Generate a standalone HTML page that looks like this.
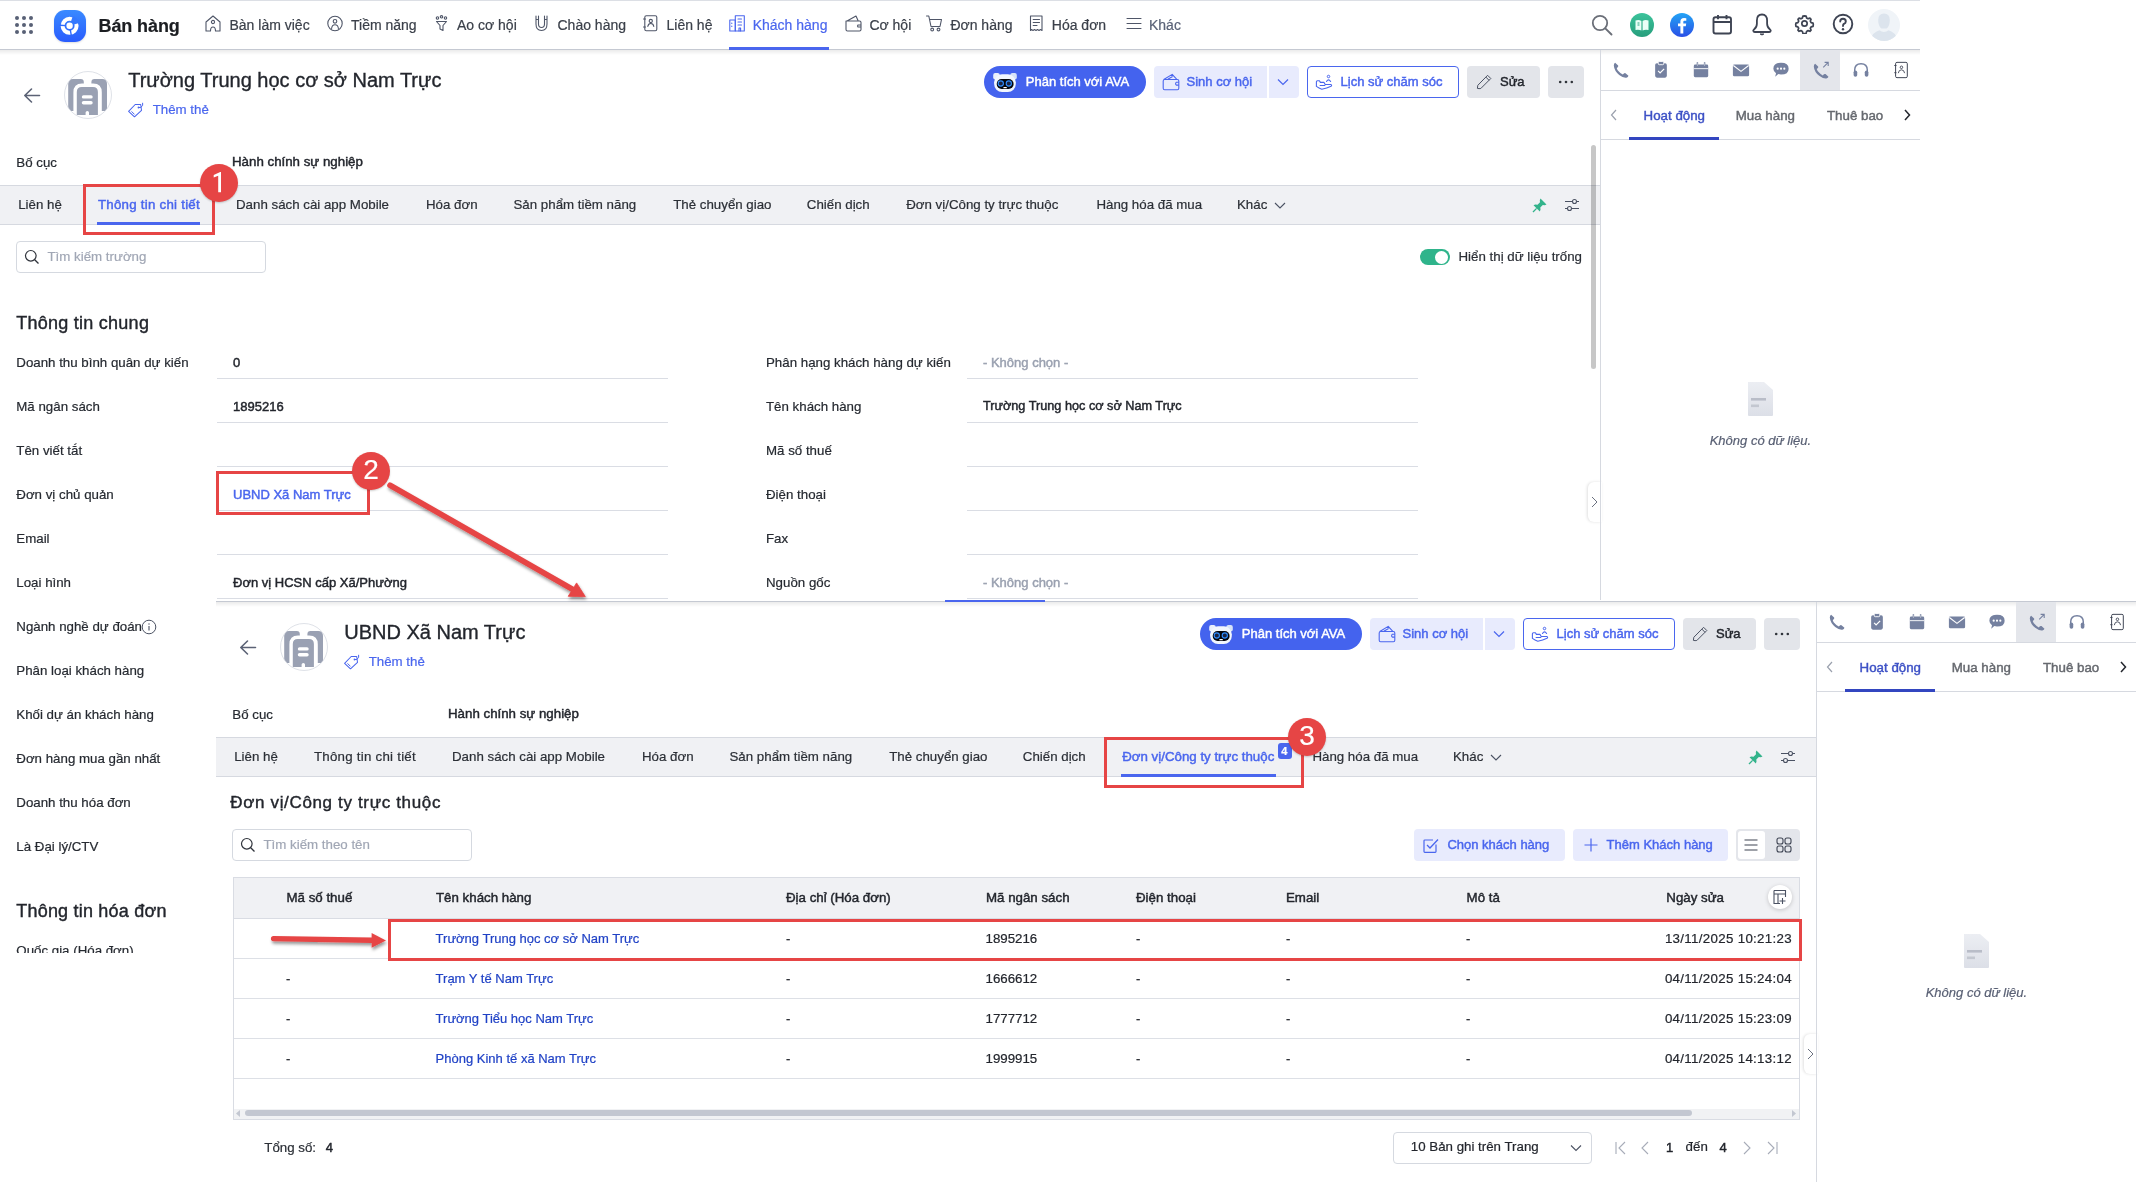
<!DOCTYPE html><html><head><meta charset="utf-8"><style>
*{margin:0;padding:0;box-sizing:border-box}
html,body{width:2145px;height:1191px;overflow:hidden;background:#fff}
body{position:relative;font-family:"Liberation Sans",sans-serif}
#A,#B,#N{will-change:transform}
.t{position:absolute;white-space:nowrap;line-height:1;-webkit-text-stroke:0.2px currentColor}
.r{position:absolute}
.md{-webkit-text-stroke:0.25px currentColor}
</style></head><body><div class="r" id="A" style="left:0;top:0;width:1920px;height:953px;overflow:hidden;background:#fff"><div class="r" style="left:0px;top:0px;width:1920px;height:49px;background:#fff"></div><div class="r" style="left:0px;top:0px;width:1920px;height:1px;background:#dcdfe5"></div><div class="r" style="left:0px;top:49px;width:1920px;height:1px;background:#c5c9d2"></div><div class="r" style="left:0px;top:50px;width:1920px;height:5px;background:linear-gradient(#00000014,#00000000)"></div><svg class="r" style="left:0px;top:0px;" width="50" height="50" viewBox="0 0 50 50" fill="none"><circle cx="17" cy="18" r="2" fill="#586075"/><circle cx="17" cy="25" r="2" fill="#586075"/><circle cx="17" cy="32" r="2" fill="#586075"/><circle cx="24" cy="18" r="2" fill="#586075"/><circle cx="24" cy="25" r="2" fill="#586075"/><circle cx="24" cy="32" r="2" fill="#586075"/><circle cx="31" cy="18" r="2" fill="#586075"/><circle cx="31" cy="25" r="2" fill="#586075"/><circle cx="31" cy="32" r="2" fill="#586075"/></svg><div class="r" style="left:54.4px;top:10px;width:31.6px;height:31.8px;border-radius:11px;background:linear-gradient(180deg,#3a8aff,#2a5cfd);box-shadow:0 1px 2px #0002"></div><svg class="r" style="left:54.4px;top:10px;" width="32" height="32" viewBox="0 0 32 32" fill="none"><circle cx="15.6" cy="15.8" r="7" stroke="#fff" stroke-width="4" fill="none"/><path d="M15.6 15.8 L18.69 6.29 A10 10 0 0 1 25.16 12.88 Z" fill="#3478ff"/><path d="M12.1 15.62 L5.6 15.28 M16.2 19.25 L17.34 25.65" stroke="#2f6afd" stroke-width="1.4"/><circle cx="15.6" cy="15.8" r="3.2" fill="#fff"/></svg><div class="t" style="left:98.5px;top:17.4px;font-size:18px;font-weight:700;color:#1c1e22;letter-spacing:-0.1px">Bán hàng</div><div class="t" style="left:229.5px;top:18.3px;font-size:14px;font-weight:400;color:#3b404a;">Bàn làm việc</div><svg class="r" style="left:204.5px;top:15px;" width="17" height="17" viewBox="0 0 17 17" fill="none"><path d="M1 7 L8 1 L15 7 V16 H10.5 Q10.5 12 8 12 Q5.5 12 5.5 16 H1Z" stroke="#4f5668" stroke-width="1.1" fill="none" stroke-linejoin="round" stroke-linecap="round"/><circle cx="8" cy="7" r="1.6" stroke="#4f5668" stroke-width="1.1" fill="none" stroke-linejoin="round" stroke-linecap="round"/></svg><div class="t" style="left:351.0px;top:18.3px;font-size:14px;font-weight:400;color:#3b404a;">Tiềm năng</div><svg class="r" style="left:326.5px;top:15px;" width="17" height="17" viewBox="0 0 17 17" fill="none"><circle cx="8" cy="8.5" r="7.2" stroke="#4f5668" stroke-width="1.1" fill="none" stroke-linejoin="round" stroke-linecap="round"/><circle cx="8" cy="6.3" r="1.8" stroke="#4f5668" stroke-width="1.1" fill="none" stroke-linejoin="round" stroke-linecap="round"/><path d="M4.6 13.5 Q5 9.7 8 9.7 Q11 9.7 11.4 13.5" stroke="#4f5668" stroke-width="1.1" fill="none" stroke-linejoin="round" stroke-linecap="round"/></svg><div class="t" style="left:457.0px;top:18.3px;font-size:14px;font-weight:400;color:#3b404a;">Ao cơ hội</div><svg class="r" style="left:434.6px;top:15px;" width="17" height="17" viewBox="0 0 17 17" fill="none"><circle cx="2.5" cy="3" r="1.2" stroke="#4f5668" stroke-width="1.1" fill="none" stroke-linejoin="round" stroke-linecap="round"/><circle cx="6.5" cy="1.8" r="1.2" stroke="#4f5668" stroke-width="1.1" fill="none" stroke-linejoin="round" stroke-linecap="round"/><circle cx="10.5" cy="3" r="1.2" stroke="#4f5668" stroke-width="1.1" fill="none" stroke-linejoin="round" stroke-linecap="round"/><path d="M1.5 6.5 H11.5 L8 10.5 V15.5 L5 14 V10.5Z" stroke="#4f5668" stroke-width="1.1" fill="none" stroke-linejoin="round" stroke-linecap="round"/></svg><div class="t" style="left:557.5px;top:18.3px;font-size:14px;font-weight:400;color:#3b404a;">Chào hàng</div><svg class="r" style="left:533.7px;top:15px;" width="17" height="17" viewBox="0 0 17 17" fill="none"><path d="M2 1 V9 Q2 15.5 7.5 15.5 Q13 15.5 13 9 V1 M2 4.5 H4.5 M10.5 4.5 H13 M4.5 1 V9 Q4.5 12.5 7.5 12.5 Q10.5 12.5 10.5 9 V1" stroke="#4f5668" stroke-width="1.1" fill="none" stroke-linejoin="round" stroke-linecap="round"/></svg><div class="t" style="left:666.5px;top:18.3px;font-size:14px;font-weight:400;color:#3b404a;">Liên hệ</div><svg class="r" style="left:643px;top:15px;" width="17" height="17" viewBox="0 0 17 17" fill="none"><rect x="1.8" y="0.8" width="12" height="15" rx="1.5" stroke="#4f5668" stroke-width="1.1" fill="none" stroke-linejoin="round" stroke-linecap="round"/><circle cx="7.8" cy="6" r="1.6" stroke="#4f5668" stroke-width="1.1" fill="none" stroke-linejoin="round" stroke-linecap="round"/><path d="M4.8 11.5 Q5.2 8.5 7.8 8.5 Q10.4 8.5 10.8 11.5 M0.5 4 H2.5 M0.5 12 H2.5" stroke="#4f5668" stroke-width="1.1" fill="none" stroke-linejoin="round" stroke-linecap="round"/></svg><div class="t" style="left:752.7px;top:18.3px;font-size:14px;font-weight:400;color:#4a66ee;">Khách hàng</div><svg class="r" style="left:729px;top:15px;" width="17" height="17" viewBox="0 0 17 17" fill="none"><rect x="0.8" y="5" width="5.5" height="11" stroke="#4a66ee" stroke-width="1.1" fill="none" stroke-linejoin="round" stroke-linecap="round"/><rect x="6.3" y="0.8" width="9" height="15.2" stroke="#4a66ee" stroke-width="1.1" fill="none" stroke-linejoin="round" stroke-linecap="round"/><path d="M2.8 8 V8.5 M2.8 11 V11.5 M9 4 H12.5 M9 7 H12.5 M9 10 H12.5 M10 16 V13 H11.6 V16" stroke="#4a66ee" stroke-width="1.1" fill="none" stroke-linejoin="round" stroke-linecap="round"/></svg><div class="t" style="left:869.4px;top:18.3px;font-size:14px;font-weight:400;color:#3b404a;">Cơ hội</div><svg class="r" style="left:844.8px;top:15px;" width="17" height="17" viewBox="0 0 17 17" fill="none"><path d="M1 6 H14.5 Q16 6 16 7.5 V14.5 Q16 16 14.5 16 H2.5 Q1 16 1 14.5Z M2 6 L11 1 L13 5.5 M16 10 H13 Q12 11 13 12 H16" stroke="#4f5668" stroke-width="1.1" fill="none" stroke-linejoin="round" stroke-linecap="round"/></svg><div class="t" style="left:950.4px;top:18.3px;font-size:14px;font-weight:400;color:#3b404a;">Đơn hàng</div><svg class="r" style="left:926px;top:15px;" width="17" height="17" viewBox="0 0 17 17" fill="none"><path d="M0.5 1 H2.8 L5 11.5 H14 L15.5 4.5 H3.8" stroke="#4f5668" stroke-width="1.1" fill="none" stroke-linejoin="round" stroke-linecap="round"/><circle cx="6.2" cy="14.5" r="1.4" stroke="#4f5668" stroke-width="1.1" fill="none" stroke-linejoin="round" stroke-linecap="round"/><circle cx="12.5" cy="14.5" r="1.4" stroke="#4f5668" stroke-width="1.1" fill="none" stroke-linejoin="round" stroke-linecap="round"/></svg><div class="t" style="left:1051.8px;top:18.3px;font-size:14px;font-weight:400;color:#3b404a;">Hóa đơn</div><svg class="r" style="left:1028.8px;top:15px;" width="17" height="17" viewBox="0 0 17 17" fill="none"><path d="M1.5 1 H13 V15.5 L11.5 14.5 L10 15.5 L8.5 14.5 L7 15.5 L5.5 14.5 L4 15.5 L2.5 14.5 L1.5 15.5Z M4.2 4.5 H10.5 M4.2 7.5 H10.5 M4.2 10.5 H8" stroke="#4f5668" stroke-width="1.1" fill="none" stroke-linejoin="round" stroke-linecap="round"/></svg><div class="t" style="left:1149.0px;top:18.3px;font-size:14px;font-weight:400;color:#5b6378;">Khác</div><svg class="r" style="left:1126px;top:15px;" width="17" height="17" viewBox="0 0 17 17" fill="none"><path d="M1 3.5 H15 M1 8.5 H15 M1 13.5 H15" stroke="#4f5668" stroke-width="1.1" fill="none" stroke-linejoin="round" stroke-linecap="round"/></svg><div class="r" style="left:729px;top:47px;width:100px;height:2.5px;background:#4a66ee"></div><svg class="r" style="left:1590px;top:13px;" width="24" height="24" viewBox="0 0 24 24" fill="none"><circle cx="10" cy="10" r="7.2" stroke="#6b6f78" stroke-width="1.8"/><path d="M15.3 15.3 L21.5 21.5" stroke="#6b6f78" stroke-width="1.9" stroke-linecap="round"/></svg><div class="r" style="left:1630px;top:13px;width:24px;height:24px;border-radius:50%;background:linear-gradient(#3cc39b,#279e7c)"></div><svg class="r" style="left:1630px;top:13px;" width="24" height="24" viewBox="0 0 24 24" fill="none"><path d="M5.5 7.5 Q9 6.5 11.4 8 V17.5 Q9 16.3 5.5 17 Z M12.6 8 Q15 6.5 18.5 7.5 V17 Q15 16.3 12.6 17.5Z" fill="#eafff7"/><path d="M7.5 10h2M7.5 12h2" stroke="#2aa582" stroke-width="1"/></svg><div class="r" style="left:1670px;top:13px;width:24px;height:24px;border-radius:50%;background:linear-gradient(#23a4f5,#2a4fe6)"></div><svg class="r" style="left:1670px;top:13px;" width="24" height="24" viewBox="0 0 24 24" fill="none"><path d="M13.3 20.5 V13.2 H15.8 L16.2 10.4 H13.3 V8.8 Q13.3 7.8 14.5 7.8 H16.3 V5.3 Q15.3 5.1 14 5.1 Q10.4 5.1 10.4 8.6 V10.4 H8 V13.2 H10.4 V20.5Z" fill="#fff"/></svg><svg class="r" style="left:1710px;top:12px;" width="24" height="24" viewBox="0 0 24 24" fill="none"><rect x="3.5" y="5.2" width="17.5" height="16.3" rx="2" stroke="#3e4453" stroke-width="1.9"/><path d="M3.5 10h17.5M8 3v4.2M16.5 3v4.2" stroke="#3e4453" stroke-width="1.9"/></svg><svg class="r" style="left:1750px;top:12px;" width="24" height="24" viewBox="0 0 24 24" fill="none"><path d="M12 2.5 Q6.9 2.5 6.9 8.5 V11.8 Q6.9 15.3 4.2 17.3 Q2.7 18.5 3.5 19.5 Q3.9 20 5 20 H19 Q20.1 20 20.5 19.5 Q21.3 18.5 19.8 17.3 Q17.1 15.3 17.1 11.8 V8.5 Q17.1 2.5 12 2.5Z" stroke="#3e4453" stroke-width="1.8" stroke-linejoin="round"/><path d="M10.2 22 Q12 24 13.8 22Z" fill="#3e4453" stroke="#3e4453" stroke-width="1"/></svg><svg class="r" style="left:1793.5px;top:13.2px;" width="21" height="21" viewBox="0 0 26 26" fill="none"><path d="M13 3.5 l2 0.3 0.6 2.4 1.8 1 2.3-0.9 1.4 1.5-0.9 2.3 1 1.8 2.4 0.6 0.3 2-0.3 2-2.4 0.6-1 1.8 0.9 2.3-1.4 1.5-2.3-0.9-1.8 1-0.6 2.4-2 0.3-2-0.3-0.6-2.4-1.8-1-2.3 0.9-1.4-1.5 0.9-2.3-1-1.8-2.4-0.6-0.3-2 0.3-2 2.4-0.6 1-1.8-0.9-2.3 1.4-1.5 2.3 0.9 1.8-1 0.6-2.4Z" stroke="#3e4453" stroke-width="2.1" stroke-linejoin="round"/><circle cx="13" cy="13" r="3.3" stroke="#3e4453" stroke-width="2.1"/></svg><svg class="r" style="left:1831px;top:12px;" width="24" height="24" viewBox="0 0 24 24" fill="none"><circle cx="12" cy="12" r="9.3" stroke="#3e4453" stroke-width="1.9"/><path d="M9.2 9.6 Q9.2 6.8 12 6.8 Q14.8 6.8 14.8 9.4 Q14.8 11 12.9 11.9 Q12 12.4 12 14" stroke="#3e4453" stroke-width="1.9" stroke-linecap="round" fill="none"/><circle cx="12" cy="17.2" r="1.2" fill="#3e4453"/></svg><div class="r" style="left:1868px;top:9px;width:32px;height:32px;border-radius:50%;background:#f0f4f8"></div><svg class="r" style="left:1868px;top:9px;" width="32" height="32" viewBox="0 0 32 32" fill="none"><defs><clipPath id="avt"><circle cx="16" cy="16" r="16"/></clipPath></defs><g clip-path="url(#avt)" fill="#dce4ed"><path d="M16 4.5 Q21.8 4.5 21.8 11 Q21.8 17.5 18.5 19.5 H13.5 Q10.2 17.5 10.2 11 Q10.2 4.5 16 4.5Z"/><path d="M2.5 31 Q4 23.5 11.5 21.3 Q13.5 23 16 23 Q18.5 23 20.5 21.3 Q28 23.5 29.5 31 Q23 34 16 34 Q9 34 2.5 31Z"/></g></svg><svg class="r" style="left:22px;top:87px;" width="20" height="17" viewBox="0 0 20 17" fill="none"><path d="M17.5 8.5 H3 M9.5 2 L2.8 8.5 L9.5 15" stroke="#5b6275" stroke-width="1.6" stroke-linecap="round" stroke-linejoin="round"/></svg><div class="r" style="left:64px;top:71px;width:48px;height:48px;border-radius:50%;border:1px solid #dfe2e8;background:#fff"></div><svg class="r" style="left:64px;top:71px;" width="48" height="48" viewBox="0 0 48 48" fill="none"><defs><clipPath id="avc"><circle cx="24" cy="24" r="23.2"/></clipPath></defs><g clip-path="url(#avc)" fill="#9aa1b3"><path d="M4.2 40 V13 Q4.2 8.1 9 8.1 H16.8 Q19.8 8.1 19.8 11 V12.6 H18 Q9.4 12.6 9.4 21.5 V40 Z"/><path d="M4.2 40 V13 Q4.2 8.1 9 8.1 H16.8 Q19.8 8.1 19.8 11 V12.6 H18 Q9.4 12.6 9.4 21.5 V40 Z" transform="translate(47.2,0) scale(-1,1)"/><path d="M12.8 44 V21 Q12.8 16 17.8 16 H28.9 Q33.9 16 33.9 21 V44 H25 V41.6 Q25 40 23.3 40 Q21.6 40 21.6 41.6 V44Z"/></g><rect x="17.8" y="24.2" width="10.9" height="3.4" rx="1.7" fill="#fff"/><rect x="17.8" y="30.1" width="10.9" height="3.4" rx="1.7" fill="#fff"/></svg><div class="t" style="left:128.2px;top:70.1px;font-size:20px;font-weight:400;color:#23262d;-webkit-text-stroke:0.35px #23262d">Trường Trung học cơ sở Nam Trực</div><svg class="r" style="left:127px;top:101px;" width="18" height="18" viewBox="0 0 18 18" fill="none"><path d="M1.6 10.4 L8.2 3.5 H13.7 L14.5 9.3 L7.5 15.8Z" stroke="#4a66ee" stroke-width="1.05" stroke-linejoin="round"/><path d="M4.5 10.4 L7.5 13.4" stroke="#4a66ee" stroke-width="1"/><circle cx="11.5" cy="6.5" r="0.9" fill="#4a66ee"/><path d="M11.5 6.5 L13.8 6.5 Q16.6 4.5 15.6 1.8" stroke="#4a66ee" stroke-width="1" fill="none"/></svg><div class="t" style="left:152.7px;top:102.9px;font-size:13.3px;font-weight:400;color:#4a66ee;">Thêm thẻ</div><div class="r" style="left:984px;top:66px;width:162px;height:32px;border-radius:16px;background:#4463ee"></div><svg class="r" style="left:992px;top:72px;" width="26" height="22" viewBox="0 0 26 22" fill="none"><rect x="1.2" y="0.9" width="6.5" height="6.5" rx="2" fill="#e9f0fb"/><rect x="18.3" y="0.9" width="6.5" height="6.5" rx="2" fill="#d7e3f8"/><rect x="2.1" y="2.3" width="21.7" height="17.8" rx="8" fill="#f1f6fd"/><rect x="4.7" y="7" width="16.9" height="9.9" rx="4.9" fill="#05060c"/><circle cx="8.8" cy="11.5" r="2.6" fill="#1b2340" stroke="#2f8dff" stroke-width="1.1"/><circle cx="16.8" cy="11.5" r="2.6" fill="#1b2340" stroke="#2f8dff" stroke-width="1.1"/><rect x="11.3" y="15" width="3.6" height="1.3" rx="0.65" fill="#fff"/></svg><div class="t" style="left:1025.8px;top:75.3px;font-size:13px;font-weight:400;color:#fff;-webkit-text-stroke:0.45px currentColor">Phân tích với AVA</div><div class="r" style="left:1154px;top:66px;width:145px;height:32px;border-radius:4px;background:#e8ebfd"></div><div class="r" style="left:1267px;top:66px;width:1.5px;height:32px;background:#fff"></div><svg class="r" style="left:1161px;top:73px;" width="20" height="20" viewBox="0 0 20 20" fill="none"><rect x="2.2" y="6.5" width="15.6" height="10.2" rx="1.4" stroke="#4a66ee" stroke-width="1.1"/><path d="M2.8 6.5 L11.2 1.4 L15.6 6.2 M6.8 6.2 L11.6 3.6" stroke="#4a66ee" stroke-width="1.1" stroke-linejoin="round"/><path d="M17.8 9.2 H15.4 Q13.8 10.6 15.4 12.1 H17.8" stroke="#4a66ee" stroke-width="1.1"/></svg><div class="t" style="left:1186.5px;top:75.3px;font-size:13px;font-weight:400;color:#4a66ee;-webkit-text-stroke:0.45px currentColor">Sinh cơ hội</div><svg class="r" style="left:1277px;top:77px;" width="12" height="10" viewBox="0 0 12 10" fill="none"><path d="M1 2.5 L6 7.5 L11 2.5" stroke="#4a66ee" stroke-width="1.2"/></svg><div class="r" style="left:1307px;top:66px;width:152px;height:32px;border-radius:4px;border:1.3px solid #4a66ee;background:#fff"></div><svg class="r" style="left:1314px;top:73px;" width="20" height="20" viewBox="0 0 20 20" fill="none"><path d="M2.4 13.4 V8.7 Q2.4 7.7 3.4 7.7 H5.4 L6.4 9.4 H9.9 L11.3 11.5 H16.7 Q18.4 12.2 17 13.3 Q13 15.2 7.8 16.2 Q5 15.2 2.4 13.4Z M6.1 12.5 H10.6 L11.5 11.5" stroke="#4a66ee" stroke-width="1.1" stroke-linejoin="round" stroke-linecap="round"/><circle cx="14.5" cy="3.5" r="1.25" stroke="#4a66ee" stroke-width="1"/><path d="M12.5 8.5 Q14.5 5.2 16.6 8.5" stroke="#4a66ee" stroke-width="1.1" stroke-linecap="round"/></svg><div class="t" style="left:1340.6px;top:75.3px;font-size:13px;font-weight:400;color:#4a66ee;-webkit-text-stroke:0.45px currentColor">Lịch sử chăm sóc</div><div class="r" style="left:1467px;top:66px;width:73px;height:32px;border-radius:4px;background:#e3e5ea"></div><svg class="r" style="left:1475px;top:73px;" width="18" height="18" viewBox="0 0 18 18" fill="none"><path d="M2.4 15.4 L2.8 12.3 L12.6 2.3 L15.8 5.5 L5.8 15.5 Q4 15.8 2.4 15.4Z M10.9 4.1 L14 7.3" stroke="#4b5263" stroke-width="1" stroke-linejoin="round"/></svg><div class="t" style="left:1500.0px;top:75.3px;font-size:13px;font-weight:400;color:#23262d;-webkit-text-stroke:0.45px currentColor">Sửa</div><div class="r" style="left:1548px;top:66px;width:36px;height:32px;border-radius:4px;background:#e3e5ea"></div><svg class="r" style="left:1558px;top:79px;" width="16" height="6" viewBox="0 0 16 6" fill="none"><circle cx="2.2" cy="3" r="1.3" fill="#30343b"/><circle cx="8" cy="3" r="1.3" fill="#30343b"/><circle cx="13.8" cy="3" r="1.3" fill="#30343b"/></svg><div class="t" style="left:16.3px;top:155.7px;font-size:13.3px;font-weight:400;color:#262a31;">Bố cục</div><div class="t" style="left:232.0px;top:154.7px;font-size:13.3px;font-weight:400;color:#23262d;-webkit-text-stroke:0.45px currentColor">Hành chính sự nghiệp</div><div class="r" style="left:0px;top:185px;width:1600px;height:40px;background:#f0f1f4;border-top:1px solid #d6d9e0;border-bottom:1px solid #d6d9e0"></div><div class="t" style="left:18.2px;top:197.7px;font-size:13.3px;font-weight:400;color:#2b2f36;">Liên hệ</div><div class="t" style="left:97.9px;top:197.7px;font-size:13.3px;font-weight:400;color:#4a66ee;letter-spacing:0.25px;-webkit-text-stroke:0.45px currentColor">Thông tin chi tiết</div><div class="t" style="left:236.0px;top:197.7px;font-size:13.3px;font-weight:400;color:#2b2f36;">Danh sách cài app Mobile</div><div class="t" style="left:426.0px;top:197.7px;font-size:13.3px;font-weight:400;color:#2b2f36;">Hóa đơn</div><div class="t" style="left:513.5px;top:197.7px;font-size:13.3px;font-weight:400;color:#2b2f36;">Sản phẩm tiềm năng</div><div class="t" style="left:673.2px;top:197.7px;font-size:13.3px;font-weight:400;color:#2b2f36;">Thẻ chuyển giao</div><div class="t" style="left:806.8px;top:197.7px;font-size:13.3px;font-weight:400;color:#2b2f36;">Chiến dịch</div><div class="t" style="left:906.2px;top:197.7px;font-size:13.3px;font-weight:400;color:#2b2f36;">Đơn vị/Công ty trực thuộc</div><div class="t" style="left:1096.4px;top:197.7px;font-size:13.3px;font-weight:400;color:#2b2f36;">Hàng hóa đã mua</div><div class="t" style="left:1237.0px;top:197.7px;font-size:13.3px;font-weight:400;color:#2b2f36;">Khác</div><div class="r" style="left:97px;top:222px;width:103px;height:3px;background:#4a66ee"></div><svg class="r" style="left:1264px;top:197px;" width="24" height="16" viewBox="0 0 24 16" fill="none"><path d="M11 5 L16 10 L21 5" stroke="#4b5263" stroke-width="1.1" fill="none" transform="translate(0,1)"/></svg><svg class="r" style="left:1531px;top:196px;" width="18" height="18" viewBox="0 0 18 18" fill="none"><path d="M9.5 2.5 L15.5 8.5 L13.8 9.2 L11.8 9 L9.3 11.5 L9.5 13.8 L8.8 15.5 L2.5 9.2 L4.2 8.5 L6.5 8.7 L9 6.2 L8.8 4.2Z" fill="#33b38b"/><path d="M5.6 12.4 L2 16" stroke="#33b38b" stroke-width="1.3"/></svg><svg class="r" style="left:1563px;top:197px;" width="18" height="16" viewBox="0 0 18 16" fill="none"><path d="M2 4.5 H16 M2 11.5 H16" stroke="#4b5263" stroke-width="1.2"/><circle cx="11.5" cy="4.5" r="2" fill="#f0f1f4" stroke="#4b5263" stroke-width="1.1"/><circle cx="6.5" cy="11.5" r="2" fill="#f0f1f4" stroke="#4b5263" stroke-width="1.1"/></svg><div class="r" style="left:1591px;top:145px;width:5px;height:224px;border-radius:3px;background:#00000038"></div><div class="r" style="left:1588px;top:482px;width:14px;height:40px;border-radius:6px 0 0 6px;background:#fff;box-shadow:-1px 0 3px #0000001f"></div><svg class="r" style="left:1589px;top:495px;" width="10" height="14" viewBox="0 0 10 14" fill="none"><path d="M3 2 L8 7 L3 12" stroke="#6b7180" stroke-width="1" fill="none"/></svg><div class="r" style="left:1600px;top:50px;width:1px;height:903px;background:#d6d9e0"></div><div class="r" style="left:1800px;top:50px;width:40px;height:40px;background:#e4e6eb"></div><div class="r" style="left:1601px;top:90px;width:319px;height:1px;background:#d6d9e0"></div><div class="r" style="left:1601px;top:139px;width:319px;height:1px;background:#d6d9e0"></div><svg class="r" style="left:1610px;top:58.8px;" width="22" height="22" viewBox="0 0 22 22" fill="none"><g transform="translate(1.1,1.1) scale(0.9)"><path d="M4.5 3 Q3 3.8 3 6 Q3.5 12 9 16.5 Q13.5 20 17 19.5 Q19 19 19.3 17.5 L16 14.5 Q15 14 14.2 14.8 L13 16 Q10 14.5 7.5 11.5 Q6.5 10 6.3 9 L7.5 7.8 Q8.3 7 7.8 6Z" fill="#7581a0"/></g></svg><svg class="r" style="left:1650px;top:58.8px;" width="22" height="22" viewBox="0 0 22 22" fill="none"><g transform="translate(1.1,1.1) scale(0.9)"><rect x="4.5" y="3.5" width="13" height="16" rx="2" fill="#7581a0"/><rect x="8" y="1.5" width="6" height="3.6" rx="1" fill="#7581a0" stroke="#fff" stroke-width="1"/><path d="M7.8 12 L10 14.2 L14.5 9.8" stroke="#fff" stroke-width="1.4" fill="none"/></g></svg><svg class="r" style="left:1690px;top:58.8px;" width="22" height="22" viewBox="0 0 22 22" fill="none"><g transform="translate(1.1,1.1) scale(0.9)"><rect x="3" y="5" width="16" height="14" rx="1.5" fill="#7581a0"/><path d="M3 9.5 H19" stroke="#fff" stroke-width="1"/><path d="M7 2.5 V7 M15 2.5 V7" stroke="#7581a0" stroke-width="1.6"/><path d="M7 3.5 V6.5 M15 3.5 V6.5" stroke="#fff" stroke-width="0.5"/></g></svg><svg class="r" style="left:1730px;top:58.8px;" width="22" height="22" viewBox="0 0 22 22" fill="none"><g transform="translate(1.1,1.1) scale(0.9)"><rect x="2" y="5" width="18" height="13" rx="1.5" fill="#7581a0"/><path d="M2.5 6 L11 12.5 L19.5 6" stroke="#fff" stroke-width="1.3" fill="none"/></g></svg><svg class="r" style="left:1770px;top:58.8px;" width="22" height="22" viewBox="0 0 22 22" fill="none"><g transform="translate(1.1,1.1) scale(0.9)"><path d="M11 3 Q19.5 3 19.5 9.5 Q19.5 16 11 16 Q9.5 16 8 15.5 L4.5 18.5 L5.5 14.5 Q2.5 12.5 2.5 9.5 Q2.5 3 11 3Z" fill="#7581a0"/><circle cx="7.3" cy="9.5" r="1.2" fill="#fff"/><circle cx="11" cy="9.5" r="1.2" fill="#fff"/><circle cx="14.7" cy="9.5" r="1.2" fill="#fff"/></g></svg><svg class="r" style="left:1810px;top:58.8px;" width="22" height="22" viewBox="0 0 22 22" fill="none"><g transform="translate(1.1,1.1) scale(0.9)"><path d="M4.5 4 Q3 4.8 3 7 Q3.5 13 9 17.5 Q13.5 21 17 20.5 Q19 20 19.3 18.5 L16 15.5 Q15 15 14.2 15.8 L13 17 Q10 15.5 7.5 12.5 Q6.5 11 6.3 10 L7.5 8.8 Q8.3 8 7.8 7Z" fill="#7581a0"/><path d="M13.5 8 L19 2.5 M15 2.5 H19 V6.5" stroke="#7581a0" stroke-width="1.2" fill="none"/></g></svg><svg class="r" style="left:1850px;top:58.8px;" width="22" height="22" viewBox="0 0 22 22" fill="none"><g transform="translate(1.1,1.1) scale(0.9)"><path d="M4 15 V11 Q4 4 11 4 Q18 4 18 11 V15" stroke="#7581a0" stroke-width="1.6" fill="none"/><rect x="2.8" y="11.5" width="4" height="7" rx="2" fill="#7581a0"/><rect x="15.2" y="11.5" width="4" height="7" rx="2" fill="#7581a0"/></g></svg><svg class="r" style="left:1890px;top:58.8px;" width="22" height="22" viewBox="0 0 22 22" fill="none"><g transform="translate(1.1,1.1) scale(0.9)"><rect x="5" y="2.5" width="13" height="17" rx="1.5" stroke="#3e4453" stroke-width="1.1" fill="none"/><circle cx="11.5" cy="8" r="1.4" stroke="#3e4453" stroke-width="1"/><path d="M8 14.5 Q8.5 10.8 11.5 10.8 Q14.5 10.8 15 14.5 M3.5 6 H6 M3.5 14 H6" stroke="#3e4453" stroke-width="1" fill="none"/></g></svg><div class="t" style="left:1643.6px;top:109.3px;font-size:13.3px;font-weight:400;color:#3e52c6;-webkit-text-stroke:0.45px currentColor">Hoạt động</div><div class="t" style="left:1735.8px;top:109.3px;font-size:13.3px;font-weight:400;color:#66696f;-webkit-text-stroke:0.45px currentColor">Mua hàng</div><div class="t" style="left:1827.0px;top:109.3px;font-size:13.3px;font-weight:400;color:#66696f;-webkit-text-stroke:0.45px currentColor">Thuê bao</div><div class="r" style="left:1629px;top:137px;width:90px;height:3px;background:#3346c0"></div><svg class="r" style="left:1609px;top:108px;" width="10" height="14" viewBox="0 0 10 14" fill="none"><path d="M7 2 L2.5 7 L7 12" stroke="#9aa0ad" stroke-width="1.2" fill="none"/></svg><svg class="r" style="left:1902px;top:108px;" width="10" height="14" viewBox="0 0 10 14" fill="none"><path d="M3 2 L7.5 7 L3 12" stroke="#23262d" stroke-width="1.5" fill="none"/></svg><svg class="r" style="left:1745px;top:380px;" width="30" height="38" viewBox="0 0 30 38" fill="none"><defs><linearGradient id="dg" x1="0" y1="0" x2="0" y2="1"><stop offset="0" stop-color="#eceef3"/><stop offset="1" stop-color="#dcdfe7"/></linearGradient></defs><path d="M3 2 H19 L28 10 V35 Q28 36 27 36 H4 Q3 36 3 35Z" fill="url(#dg)"/><rect x="6" y="18" width="15" height="2.6" fill="#b9bdc8"/><rect x="6" y="24.5" width="8" height="2.6" fill="#c3c7d0"/></svg><div class="t" style="left:1709.7px;top:433.6px;font-size:13px;font-weight:400;color:#596074;font-style:italic">Không có dữ liệu.</div><div class="r" style="left:16px;top:241px;width:250px;height:32px;border:1px solid #d5d9e0;border-radius:4px;background:#fff"></div><svg class="r" style="left:24px;top:249px;" width="16" height="16" viewBox="0 0 16 16" fill="none"><circle cx="6.8" cy="6.8" r="5.3" stroke="#2f333b" stroke-width="1.2"/><path d="M10.7 10.7 L14.5 14.5" stroke="#2f333b" stroke-width="1.3"/></svg><div class="t" style="left:47.5px;top:250.0px;font-size:13.3px;font-weight:400;color:#a1a7b5;">Tìm kiếm trường</div><div class="r" style="left:1420px;top:249px;width:30px;height:16px;border-radius:8px;background:#2fb48b"></div><div class="r" style="left:1435px;top:250.5px;width:13px;height:13px;border-radius:50%;background:#fff"></div><div class="t" style="left:1458.5px;top:249.5px;font-size:13.3px;font-weight:400;color:#2b2f36;">Hiển thị dữ liệu trống</div><div class="t" style="left:16.3px;top:314.2px;font-size:18px;font-weight:400;color:#23262d;letter-spacing:0.25px;-webkit-text-stroke:0.4px #23262d">Thông tin chung</div><div class="t" style="left:16.3px;top:355.7px;font-size:13.3px;font-weight:400;color:#262a31;">Doanh thu bình quân dự kiến</div><div class="r" style="left:217px;top:378px;width:451px;height:1px;background:#dadde4"></div><div class="t" style="left:233.0px;top:356.0px;font-size:13px;font-weight:400;color:#23262d;-webkit-text-stroke:0.45px currentColor">0</div><div class="t" style="left:16.3px;top:399.7px;font-size:13.3px;font-weight:400;color:#262a31;">Mã ngân sách</div><div class="r" style="left:217px;top:422px;width:451px;height:1px;background:#dadde4"></div><div class="t" style="left:233.0px;top:400.0px;font-size:13px;font-weight:400;color:#23262d;-webkit-text-stroke:0.45px currentColor">1895216</div><div class="t" style="left:16.3px;top:443.7px;font-size:13.3px;font-weight:400;color:#262a31;">Tên viết tắt</div><div class="r" style="left:217px;top:466px;width:451px;height:1px;background:#dadde4"></div><div class="t" style="left:16.3px;top:487.7px;font-size:13.3px;font-weight:400;color:#262a31;">Đơn vị chủ quản</div><div class="r" style="left:217px;top:510px;width:451px;height:1px;background:#dadde4"></div><div class="t" style="left:233.0px;top:488.0px;font-size:13px;font-weight:400;color:#4a66ee;-webkit-text-stroke:0.45px currentColor">UBND Xã Nam Trực</div><div class="t" style="left:16.3px;top:531.7px;font-size:13.3px;font-weight:400;color:#262a31;">Email</div><div class="r" style="left:217px;top:554px;width:451px;height:1px;background:#dadde4"></div><div class="t" style="left:16.3px;top:575.7px;font-size:13.3px;font-weight:400;color:#262a31;">Loại hình</div><div class="r" style="left:217px;top:598px;width:451px;height:1px;background:#dadde4"></div><div class="t" style="left:233.0px;top:576.0px;font-size:13px;font-weight:400;color:#23262d;-webkit-text-stroke:0.45px currentColor">Đơn vị HCSN cấp Xã/Phường</div><div class="t" style="left:16.3px;top:619.7px;font-size:13.3px;font-weight:400;color:#262a31;">Ngành nghề dự đoán</div><div class="r" style="left:217px;top:642px;width:451px;height:1px;background:#dadde4"></div><div class="t" style="left:16.3px;top:663.7px;font-size:13.3px;font-weight:400;color:#262a31;">Phân loại khách hàng</div><div class="r" style="left:217px;top:686px;width:451px;height:1px;background:#dadde4"></div><div class="t" style="left:16.3px;top:707.7px;font-size:13.3px;font-weight:400;color:#262a31;">Khối dự án khách hàng</div><div class="r" style="left:217px;top:730px;width:451px;height:1px;background:#dadde4"></div><div class="t" style="left:16.3px;top:751.7px;font-size:13.3px;font-weight:400;color:#262a31;">Đơn hàng mua gần nhất</div><div class="r" style="left:217px;top:774px;width:451px;height:1px;background:#dadde4"></div><div class="t" style="left:16.3px;top:795.7px;font-size:13.3px;font-weight:400;color:#262a31;">Doanh thu hóa đơn</div><div class="r" style="left:217px;top:818px;width:451px;height:1px;background:#dadde4"></div><div class="t" style="left:16.3px;top:839.7px;font-size:13.3px;font-weight:400;color:#262a31;">Là Đại lý/CTV</div><div class="r" style="left:217px;top:862px;width:451px;height:1px;background:#dadde4"></div><svg class="r" style="left:141px;top:619px;" width="16" height="16" viewBox="0 0 16 16" fill="none"><circle cx="8" cy="8" r="6.8" stroke="#4b5263" stroke-width="1"/><path d="M8 7 V11.5" stroke="#4b5263" stroke-width="1.1"/><circle cx="8" cy="5" r="0.7" fill="#4b5263"/></svg><div class="t" style="left:766.0px;top:355.7px;font-size:13.3px;font-weight:400;color:#262a31;">Phân hạng khách hàng dự kiến</div><div class="r" style="left:967px;top:378px;width:451px;height:1px;background:#dadde4"></div><div class="t" style="left:983.0px;top:356.0px;font-size:13px;font-weight:400;color:#9aa1b0;-webkit-text-stroke:0.45px currentColor">- Không chọn -</div><div class="t" style="left:766.0px;top:399.7px;font-size:13.3px;font-weight:400;color:#262a31;">Tên khách hàng</div><div class="r" style="left:967px;top:422px;width:451px;height:1px;background:#dadde4"></div><div class="t" style="left:983.0px;top:400.2px;font-size:12.7px;font-weight:400;color:#23262d;-webkit-text-stroke:0.45px currentColor">Trường Trung học cơ sở Nam Trực</div><div class="t" style="left:766.0px;top:443.7px;font-size:13.3px;font-weight:400;color:#262a31;">Mã số thuế</div><div class="r" style="left:967px;top:466px;width:451px;height:1px;background:#dadde4"></div><div class="t" style="left:766.0px;top:487.7px;font-size:13.3px;font-weight:400;color:#262a31;">Điện thoại</div><div class="r" style="left:967px;top:510px;width:451px;height:1px;background:#dadde4"></div><div class="t" style="left:766.0px;top:531.7px;font-size:13.3px;font-weight:400;color:#262a31;">Fax</div><div class="r" style="left:967px;top:554px;width:451px;height:1px;background:#dadde4"></div><div class="t" style="left:766.0px;top:575.7px;font-size:13.3px;font-weight:400;color:#262a31;">Nguồn gốc</div><div class="r" style="left:967px;top:598px;width:451px;height:1px;background:#dadde4"></div><div class="t" style="left:983.0px;top:576.0px;font-size:13px;font-weight:400;color:#9aa1b0;-webkit-text-stroke:0.45px currentColor">- Không chọn -</div><div class="t" style="left:16.3px;top:901.8px;font-size:18px;font-weight:400;color:#23262d;letter-spacing:0.2px;-webkit-text-stroke:0.4px #23262d">Thông tin hóa đơn</div><div class="t" style="left:16.3px;top:943.7px;font-size:13.3px;font-weight:400;color:#262a31;">Quốc gia (Hóa đơn)</div></div><div class="r" id="B" style="left:216px;top:600px;width:1920px;height:582px;overflow:hidden;background:#fff"><div class="r" style="left:0;top:-48px;width:1920px;height:680px"><div class="r" style="left:0px;top:0px;width:1920px;height:49px;background:#fff"></div><div class="r" style="left:0px;top:0px;width:1920px;height:1px;background:#dcdfe5"></div><div class="r" style="left:0px;top:49px;width:1920px;height:1px;background:#c5c9d2"></div><div class="r" style="left:0px;top:50px;width:1920px;height:5px;background:linear-gradient(#00000014,#00000000)"></div><svg class="r" style="left:0px;top:0px;" width="50" height="50" viewBox="0 0 50 50" fill="none"><circle cx="17" cy="18" r="2" fill="#586075"/><circle cx="17" cy="25" r="2" fill="#586075"/><circle cx="17" cy="32" r="2" fill="#586075"/><circle cx="24" cy="18" r="2" fill="#586075"/><circle cx="24" cy="25" r="2" fill="#586075"/><circle cx="24" cy="32" r="2" fill="#586075"/><circle cx="31" cy="18" r="2" fill="#586075"/><circle cx="31" cy="25" r="2" fill="#586075"/><circle cx="31" cy="32" r="2" fill="#586075"/></svg><div class="r" style="left:54.4px;top:10px;width:31.6px;height:31.8px;border-radius:11px;background:linear-gradient(180deg,#3a8aff,#2a5cfd);box-shadow:0 1px 2px #0002"></div><svg class="r" style="left:54.4px;top:10px;" width="32" height="32" viewBox="0 0 32 32" fill="none"><circle cx="15.6" cy="15.8" r="7" stroke="#fff" stroke-width="4" fill="none"/><path d="M15.6 15.8 L18.69 6.29 A10 10 0 0 1 25.16 12.88 Z" fill="#3478ff"/><path d="M12.1 15.62 L5.6 15.28 M16.2 19.25 L17.34 25.65" stroke="#2f6afd" stroke-width="1.4"/><circle cx="15.6" cy="15.8" r="3.2" fill="#fff"/></svg><div class="t" style="left:98.5px;top:17.4px;font-size:18px;font-weight:700;color:#1c1e22;letter-spacing:-0.1px">Bán hàng</div><div class="t" style="left:229.5px;top:18.3px;font-size:14px;font-weight:400;color:#3b404a;">Bàn làm việc</div><svg class="r" style="left:204.5px;top:15px;" width="17" height="17" viewBox="0 0 17 17" fill="none"><path d="M1 7 L8 1 L15 7 V16 H10.5 Q10.5 12 8 12 Q5.5 12 5.5 16 H1Z" stroke="#4f5668" stroke-width="1.1" fill="none" stroke-linejoin="round" stroke-linecap="round"/><circle cx="8" cy="7" r="1.6" stroke="#4f5668" stroke-width="1.1" fill="none" stroke-linejoin="round" stroke-linecap="round"/></svg><div class="t" style="left:351.0px;top:18.3px;font-size:14px;font-weight:400;color:#3b404a;">Tiềm năng</div><svg class="r" style="left:326.5px;top:15px;" width="17" height="17" viewBox="0 0 17 17" fill="none"><circle cx="8" cy="8.5" r="7.2" stroke="#4f5668" stroke-width="1.1" fill="none" stroke-linejoin="round" stroke-linecap="round"/><circle cx="8" cy="6.3" r="1.8" stroke="#4f5668" stroke-width="1.1" fill="none" stroke-linejoin="round" stroke-linecap="round"/><path d="M4.6 13.5 Q5 9.7 8 9.7 Q11 9.7 11.4 13.5" stroke="#4f5668" stroke-width="1.1" fill="none" stroke-linejoin="round" stroke-linecap="round"/></svg><div class="t" style="left:457.0px;top:18.3px;font-size:14px;font-weight:400;color:#3b404a;">Ao cơ hội</div><svg class="r" style="left:434.6px;top:15px;" width="17" height="17" viewBox="0 0 17 17" fill="none"><circle cx="2.5" cy="3" r="1.2" stroke="#4f5668" stroke-width="1.1" fill="none" stroke-linejoin="round" stroke-linecap="round"/><circle cx="6.5" cy="1.8" r="1.2" stroke="#4f5668" stroke-width="1.1" fill="none" stroke-linejoin="round" stroke-linecap="round"/><circle cx="10.5" cy="3" r="1.2" stroke="#4f5668" stroke-width="1.1" fill="none" stroke-linejoin="round" stroke-linecap="round"/><path d="M1.5 6.5 H11.5 L8 10.5 V15.5 L5 14 V10.5Z" stroke="#4f5668" stroke-width="1.1" fill="none" stroke-linejoin="round" stroke-linecap="round"/></svg><div class="t" style="left:557.5px;top:18.3px;font-size:14px;font-weight:400;color:#3b404a;">Chào hàng</div><svg class="r" style="left:533.7px;top:15px;" width="17" height="17" viewBox="0 0 17 17" fill="none"><path d="M2 1 V9 Q2 15.5 7.5 15.5 Q13 15.5 13 9 V1 M2 4.5 H4.5 M10.5 4.5 H13 M4.5 1 V9 Q4.5 12.5 7.5 12.5 Q10.5 12.5 10.5 9 V1" stroke="#4f5668" stroke-width="1.1" fill="none" stroke-linejoin="round" stroke-linecap="round"/></svg><div class="t" style="left:666.5px;top:18.3px;font-size:14px;font-weight:400;color:#3b404a;">Liên hệ</div><svg class="r" style="left:643px;top:15px;" width="17" height="17" viewBox="0 0 17 17" fill="none"><rect x="1.8" y="0.8" width="12" height="15" rx="1.5" stroke="#4f5668" stroke-width="1.1" fill="none" stroke-linejoin="round" stroke-linecap="round"/><circle cx="7.8" cy="6" r="1.6" stroke="#4f5668" stroke-width="1.1" fill="none" stroke-linejoin="round" stroke-linecap="round"/><path d="M4.8 11.5 Q5.2 8.5 7.8 8.5 Q10.4 8.5 10.8 11.5 M0.5 4 H2.5 M0.5 12 H2.5" stroke="#4f5668" stroke-width="1.1" fill="none" stroke-linejoin="round" stroke-linecap="round"/></svg><div class="t" style="left:752.7px;top:18.3px;font-size:14px;font-weight:400;color:#4a66ee;">Khách hàng</div><svg class="r" style="left:729px;top:15px;" width="17" height="17" viewBox="0 0 17 17" fill="none"><rect x="0.8" y="5" width="5.5" height="11" stroke="#4a66ee" stroke-width="1.1" fill="none" stroke-linejoin="round" stroke-linecap="round"/><rect x="6.3" y="0.8" width="9" height="15.2" stroke="#4a66ee" stroke-width="1.1" fill="none" stroke-linejoin="round" stroke-linecap="round"/><path d="M2.8 8 V8.5 M2.8 11 V11.5 M9 4 H12.5 M9 7 H12.5 M9 10 H12.5 M10 16 V13 H11.6 V16" stroke="#4a66ee" stroke-width="1.1" fill="none" stroke-linejoin="round" stroke-linecap="round"/></svg><div class="t" style="left:869.4px;top:18.3px;font-size:14px;font-weight:400;color:#3b404a;">Cơ hội</div><svg class="r" style="left:844.8px;top:15px;" width="17" height="17" viewBox="0 0 17 17" fill="none"><path d="M1 6 H14.5 Q16 6 16 7.5 V14.5 Q16 16 14.5 16 H2.5 Q1 16 1 14.5Z M2 6 L11 1 L13 5.5 M16 10 H13 Q12 11 13 12 H16" stroke="#4f5668" stroke-width="1.1" fill="none" stroke-linejoin="round" stroke-linecap="round"/></svg><div class="t" style="left:950.4px;top:18.3px;font-size:14px;font-weight:400;color:#3b404a;">Đơn hàng</div><svg class="r" style="left:926px;top:15px;" width="17" height="17" viewBox="0 0 17 17" fill="none"><path d="M0.5 1 H2.8 L5 11.5 H14 L15.5 4.5 H3.8" stroke="#4f5668" stroke-width="1.1" fill="none" stroke-linejoin="round" stroke-linecap="round"/><circle cx="6.2" cy="14.5" r="1.4" stroke="#4f5668" stroke-width="1.1" fill="none" stroke-linejoin="round" stroke-linecap="round"/><circle cx="12.5" cy="14.5" r="1.4" stroke="#4f5668" stroke-width="1.1" fill="none" stroke-linejoin="round" stroke-linecap="round"/></svg><div class="t" style="left:1051.8px;top:18.3px;font-size:14px;font-weight:400;color:#3b404a;">Hóa đơn</div><svg class="r" style="left:1028.8px;top:15px;" width="17" height="17" viewBox="0 0 17 17" fill="none"><path d="M1.5 1 H13 V15.5 L11.5 14.5 L10 15.5 L8.5 14.5 L7 15.5 L5.5 14.5 L4 15.5 L2.5 14.5 L1.5 15.5Z M4.2 4.5 H10.5 M4.2 7.5 H10.5 M4.2 10.5 H8" stroke="#4f5668" stroke-width="1.1" fill="none" stroke-linejoin="round" stroke-linecap="round"/></svg><div class="t" style="left:1149.0px;top:18.3px;font-size:14px;font-weight:400;color:#5b6378;">Khác</div><svg class="r" style="left:1126px;top:15px;" width="17" height="17" viewBox="0 0 17 17" fill="none"><path d="M1 3.5 H15 M1 8.5 H15 M1 13.5 H15" stroke="#4f5668" stroke-width="1.1" fill="none" stroke-linejoin="round" stroke-linecap="round"/></svg><div class="r" style="left:729px;top:47px;width:100px;height:2.5px;background:#4a66ee"></div><svg class="r" style="left:1590px;top:13px;" width="24" height="24" viewBox="0 0 24 24" fill="none"><circle cx="10" cy="10" r="7.2" stroke="#6b6f78" stroke-width="1.8"/><path d="M15.3 15.3 L21.5 21.5" stroke="#6b6f78" stroke-width="1.9" stroke-linecap="round"/></svg><div class="r" style="left:1630px;top:13px;width:24px;height:24px;border-radius:50%;background:linear-gradient(#3cc39b,#279e7c)"></div><svg class="r" style="left:1630px;top:13px;" width="24" height="24" viewBox="0 0 24 24" fill="none"><path d="M5.5 7.5 Q9 6.5 11.4 8 V17.5 Q9 16.3 5.5 17 Z M12.6 8 Q15 6.5 18.5 7.5 V17 Q15 16.3 12.6 17.5Z" fill="#eafff7"/><path d="M7.5 10h2M7.5 12h2" stroke="#2aa582" stroke-width="1"/></svg><div class="r" style="left:1670px;top:13px;width:24px;height:24px;border-radius:50%;background:linear-gradient(#23a4f5,#2a4fe6)"></div><svg class="r" style="left:1670px;top:13px;" width="24" height="24" viewBox="0 0 24 24" fill="none"><path d="M13.3 20.5 V13.2 H15.8 L16.2 10.4 H13.3 V8.8 Q13.3 7.8 14.5 7.8 H16.3 V5.3 Q15.3 5.1 14 5.1 Q10.4 5.1 10.4 8.6 V10.4 H8 V13.2 H10.4 V20.5Z" fill="#fff"/></svg><svg class="r" style="left:1710px;top:12px;" width="24" height="24" viewBox="0 0 24 24" fill="none"><rect x="3.5" y="5.2" width="17.5" height="16.3" rx="2" stroke="#3e4453" stroke-width="1.9"/><path d="M3.5 10h17.5M8 3v4.2M16.5 3v4.2" stroke="#3e4453" stroke-width="1.9"/></svg><svg class="r" style="left:1750px;top:12px;" width="24" height="24" viewBox="0 0 24 24" fill="none"><path d="M12 2.5 Q6.9 2.5 6.9 8.5 V11.8 Q6.9 15.3 4.2 17.3 Q2.7 18.5 3.5 19.5 Q3.9 20 5 20 H19 Q20.1 20 20.5 19.5 Q21.3 18.5 19.8 17.3 Q17.1 15.3 17.1 11.8 V8.5 Q17.1 2.5 12 2.5Z" stroke="#3e4453" stroke-width="1.8" stroke-linejoin="round"/><path d="M10.2 22 Q12 24 13.8 22Z" fill="#3e4453" stroke="#3e4453" stroke-width="1"/></svg><svg class="r" style="left:1793.5px;top:13.2px;" width="21" height="21" viewBox="0 0 26 26" fill="none"><path d="M13 3.5 l2 0.3 0.6 2.4 1.8 1 2.3-0.9 1.4 1.5-0.9 2.3 1 1.8 2.4 0.6 0.3 2-0.3 2-2.4 0.6-1 1.8 0.9 2.3-1.4 1.5-2.3-0.9-1.8 1-0.6 2.4-2 0.3-2-0.3-0.6-2.4-1.8-1-2.3 0.9-1.4-1.5 0.9-2.3-1-1.8-2.4-0.6-0.3-2 0.3-2 2.4-0.6 1-1.8-0.9-2.3 1.4-1.5 2.3 0.9 1.8-1 0.6-2.4Z" stroke="#3e4453" stroke-width="2.1" stroke-linejoin="round"/><circle cx="13" cy="13" r="3.3" stroke="#3e4453" stroke-width="2.1"/></svg><svg class="r" style="left:1831px;top:12px;" width="24" height="24" viewBox="0 0 24 24" fill="none"><circle cx="12" cy="12" r="9.3" stroke="#3e4453" stroke-width="1.9"/><path d="M9.2 9.6 Q9.2 6.8 12 6.8 Q14.8 6.8 14.8 9.4 Q14.8 11 12.9 11.9 Q12 12.4 12 14" stroke="#3e4453" stroke-width="1.9" stroke-linecap="round" fill="none"/><circle cx="12" cy="17.2" r="1.2" fill="#3e4453"/></svg><div class="r" style="left:1868px;top:9px;width:32px;height:32px;border-radius:50%;background:#f0f4f8"></div><svg class="r" style="left:1868px;top:9px;" width="32" height="32" viewBox="0 0 32 32" fill="none"><defs><clipPath id="avt"><circle cx="16" cy="16" r="16"/></clipPath></defs><g clip-path="url(#avt)" fill="#dce4ed"><path d="M16 4.5 Q21.8 4.5 21.8 11 Q21.8 17.5 18.5 19.5 H13.5 Q10.2 17.5 10.2 11 Q10.2 4.5 16 4.5Z"/><path d="M2.5 31 Q4 23.5 11.5 21.3 Q13.5 23 16 23 Q18.5 23 20.5 21.3 Q28 23.5 29.5 31 Q23 34 16 34 Q9 34 2.5 31Z"/></g></svg><svg class="r" style="left:22px;top:87px;" width="20" height="17" viewBox="0 0 20 17" fill="none"><path d="M17.5 8.5 H3 M9.5 2 L2.8 8.5 L9.5 15" stroke="#5b6275" stroke-width="1.6" stroke-linecap="round" stroke-linejoin="round"/></svg><div class="r" style="left:64px;top:71px;width:48px;height:48px;border-radius:50%;border:1px solid #dfe2e8;background:#fff"></div><svg class="r" style="left:64px;top:71px;" width="48" height="48" viewBox="0 0 48 48" fill="none"><defs><clipPath id="avc"><circle cx="24" cy="24" r="23.2"/></clipPath></defs><g clip-path="url(#avc)" fill="#9aa1b3"><path d="M4.2 40 V13 Q4.2 8.1 9 8.1 H16.8 Q19.8 8.1 19.8 11 V12.6 H18 Q9.4 12.6 9.4 21.5 V40 Z"/><path d="M4.2 40 V13 Q4.2 8.1 9 8.1 H16.8 Q19.8 8.1 19.8 11 V12.6 H18 Q9.4 12.6 9.4 21.5 V40 Z" transform="translate(47.2,0) scale(-1,1)"/><path d="M12.8 44 V21 Q12.8 16 17.8 16 H28.9 Q33.9 16 33.9 21 V44 H25 V41.6 Q25 40 23.3 40 Q21.6 40 21.6 41.6 V44Z"/></g><rect x="17.8" y="24.2" width="10.9" height="3.4" rx="1.7" fill="#fff"/><rect x="17.8" y="30.1" width="10.9" height="3.4" rx="1.7" fill="#fff"/></svg><div class="t" style="left:128.2px;top:70.1px;font-size:20px;font-weight:400;color:#23262d;-webkit-text-stroke:0.35px #23262d">UBND Xã Nam Trực</div><svg class="r" style="left:127px;top:101px;" width="18" height="18" viewBox="0 0 18 18" fill="none"><path d="M1.6 10.4 L8.2 3.5 H13.7 L14.5 9.3 L7.5 15.8Z" stroke="#4a66ee" stroke-width="1.05" stroke-linejoin="round"/><path d="M4.5 10.4 L7.5 13.4" stroke="#4a66ee" stroke-width="1"/><circle cx="11.5" cy="6.5" r="0.9" fill="#4a66ee"/><path d="M11.5 6.5 L13.8 6.5 Q16.6 4.5 15.6 1.8" stroke="#4a66ee" stroke-width="1" fill="none"/></svg><div class="t" style="left:152.7px;top:102.9px;font-size:13.3px;font-weight:400;color:#4a66ee;">Thêm thẻ</div><div class="r" style="left:984px;top:66px;width:162px;height:32px;border-radius:16px;background:#4463ee"></div><svg class="r" style="left:992px;top:72px;" width="26" height="22" viewBox="0 0 26 22" fill="none"><rect x="1.2" y="0.9" width="6.5" height="6.5" rx="2" fill="#e9f0fb"/><rect x="18.3" y="0.9" width="6.5" height="6.5" rx="2" fill="#d7e3f8"/><rect x="2.1" y="2.3" width="21.7" height="17.8" rx="8" fill="#f1f6fd"/><rect x="4.7" y="7" width="16.9" height="9.9" rx="4.9" fill="#05060c"/><circle cx="8.8" cy="11.5" r="2.6" fill="#1b2340" stroke="#2f8dff" stroke-width="1.1"/><circle cx="16.8" cy="11.5" r="2.6" fill="#1b2340" stroke="#2f8dff" stroke-width="1.1"/><rect x="11.3" y="15" width="3.6" height="1.3" rx="0.65" fill="#fff"/></svg><div class="t" style="left:1025.8px;top:75.3px;font-size:13px;font-weight:400;color:#fff;-webkit-text-stroke:0.45px currentColor">Phân tích với AVA</div><div class="r" style="left:1154px;top:66px;width:145px;height:32px;border-radius:4px;background:#e8ebfd"></div><div class="r" style="left:1267px;top:66px;width:1.5px;height:32px;background:#fff"></div><svg class="r" style="left:1161px;top:73px;" width="20" height="20" viewBox="0 0 20 20" fill="none"><rect x="2.2" y="6.5" width="15.6" height="10.2" rx="1.4" stroke="#4a66ee" stroke-width="1.1"/><path d="M2.8 6.5 L11.2 1.4 L15.6 6.2 M6.8 6.2 L11.6 3.6" stroke="#4a66ee" stroke-width="1.1" stroke-linejoin="round"/><path d="M17.8 9.2 H15.4 Q13.8 10.6 15.4 12.1 H17.8" stroke="#4a66ee" stroke-width="1.1"/></svg><div class="t" style="left:1186.5px;top:75.3px;font-size:13px;font-weight:400;color:#4a66ee;-webkit-text-stroke:0.45px currentColor">Sinh cơ hội</div><svg class="r" style="left:1277px;top:77px;" width="12" height="10" viewBox="0 0 12 10" fill="none"><path d="M1 2.5 L6 7.5 L11 2.5" stroke="#4a66ee" stroke-width="1.2"/></svg><div class="r" style="left:1307px;top:66px;width:152px;height:32px;border-radius:4px;border:1.3px solid #4a66ee;background:#fff"></div><svg class="r" style="left:1314px;top:73px;" width="20" height="20" viewBox="0 0 20 20" fill="none"><path d="M2.4 13.4 V8.7 Q2.4 7.7 3.4 7.7 H5.4 L6.4 9.4 H9.9 L11.3 11.5 H16.7 Q18.4 12.2 17 13.3 Q13 15.2 7.8 16.2 Q5 15.2 2.4 13.4Z M6.1 12.5 H10.6 L11.5 11.5" stroke="#4a66ee" stroke-width="1.1" stroke-linejoin="round" stroke-linecap="round"/><circle cx="14.5" cy="3.5" r="1.25" stroke="#4a66ee" stroke-width="1"/><path d="M12.5 8.5 Q14.5 5.2 16.6 8.5" stroke="#4a66ee" stroke-width="1.1" stroke-linecap="round"/></svg><div class="t" style="left:1340.6px;top:75.3px;font-size:13px;font-weight:400;color:#4a66ee;-webkit-text-stroke:0.45px currentColor">Lịch sử chăm sóc</div><div class="r" style="left:1467px;top:66px;width:73px;height:32px;border-radius:4px;background:#e3e5ea"></div><svg class="r" style="left:1475px;top:73px;" width="18" height="18" viewBox="0 0 18 18" fill="none"><path d="M2.4 15.4 L2.8 12.3 L12.6 2.3 L15.8 5.5 L5.8 15.5 Q4 15.8 2.4 15.4Z M10.9 4.1 L14 7.3" stroke="#4b5263" stroke-width="1" stroke-linejoin="round"/></svg><div class="t" style="left:1500.0px;top:75.3px;font-size:13px;font-weight:400;color:#23262d;-webkit-text-stroke:0.45px currentColor">Sửa</div><div class="r" style="left:1548px;top:66px;width:36px;height:32px;border-radius:4px;background:#e3e5ea"></div><svg class="r" style="left:1558px;top:79px;" width="16" height="6" viewBox="0 0 16 6" fill="none"><circle cx="2.2" cy="3" r="1.3" fill="#30343b"/><circle cx="8" cy="3" r="1.3" fill="#30343b"/><circle cx="13.8" cy="3" r="1.3" fill="#30343b"/></svg><div class="t" style="left:16.3px;top:155.7px;font-size:13.3px;font-weight:400;color:#262a31;">Bố cục</div><div class="t" style="left:232.0px;top:154.7px;font-size:13.3px;font-weight:400;color:#23262d;-webkit-text-stroke:0.45px currentColor">Hành chính sự nghiệp</div><div class="r" style="left:0px;top:185px;width:1600px;height:40px;background:#f0f1f4;border-top:1px solid #d6d9e0;border-bottom:1px solid #d6d9e0"></div><div class="t" style="left:18.2px;top:197.7px;font-size:13.3px;font-weight:400;color:#2b2f36;">Liên hệ</div><div class="t" style="left:97.9px;top:197.7px;font-size:13.3px;font-weight:400;color:#2b2f36;letter-spacing:0.25px;">Thông tin chi tiết</div><div class="t" style="left:236.0px;top:197.7px;font-size:13.3px;font-weight:400;color:#2b2f36;">Danh sách cài app Mobile</div><div class="t" style="left:426.0px;top:197.7px;font-size:13.3px;font-weight:400;color:#2b2f36;">Hóa đơn</div><div class="t" style="left:513.5px;top:197.7px;font-size:13.3px;font-weight:400;color:#2b2f36;">Sản phẩm tiềm năng</div><div class="t" style="left:673.2px;top:197.7px;font-size:13.3px;font-weight:400;color:#2b2f36;">Thẻ chuyển giao</div><div class="t" style="left:806.8px;top:197.7px;font-size:13.3px;font-weight:400;color:#2b2f36;">Chiến dịch</div><div class="t" style="left:906.2px;top:197.7px;font-size:13.3px;font-weight:400;color:#4a66ee;-webkit-text-stroke:0.45px currentColor">Đơn vị/Công ty trực thuộc</div><div class="t" style="left:1096.4px;top:197.7px;font-size:13.3px;font-weight:400;color:#2b2f36;">Hàng hóa đã mua</div><div class="t" style="left:1237.0px;top:197.7px;font-size:13.3px;font-weight:400;color:#2b2f36;">Khác</div><div class="r" style="left:905px;top:222px;width:155px;height:3px;background:#4a66ee"></div><svg class="r" style="left:1264px;top:197px;" width="24" height="16" viewBox="0 0 24 16" fill="none"><path d="M11 5 L16 10 L21 5" stroke="#4b5263" stroke-width="1.1" fill="none" transform="translate(0,1)"/></svg><svg class="r" style="left:1531px;top:196px;" width="18" height="18" viewBox="0 0 18 18" fill="none"><path d="M9.5 2.5 L15.5 8.5 L13.8 9.2 L11.8 9 L9.3 11.5 L9.5 13.8 L8.8 15.5 L2.5 9.2 L4.2 8.5 L6.5 8.7 L9 6.2 L8.8 4.2Z" fill="#33b38b"/><path d="M5.6 12.4 L2 16" stroke="#33b38b" stroke-width="1.3"/></svg><svg class="r" style="left:1563px;top:197px;" width="18" height="16" viewBox="0 0 18 16" fill="none"><path d="M2 4.5 H16 M2 11.5 H16" stroke="#4b5263" stroke-width="1.2"/><circle cx="11.5" cy="4.5" r="2" fill="#f0f1f4" stroke="#4b5263" stroke-width="1.1"/><circle cx="6.5" cy="11.5" r="2" fill="#f0f1f4" stroke="#4b5263" stroke-width="1.1"/></svg><div class="r" style="left:1062px;top:191px;width:14px;height:15.5px;border-radius:3px;background:#4a66ee"></div><div class="t" style="left:1065.3px;top:193.7px;font-size:11px;font-weight:700;color:#fff;">4</div><div class="r" style="left:1588px;top:482px;width:14px;height:40px;border-radius:6px 0 0 6px;background:#fff;box-shadow:-1px 0 3px #0000001f"></div><svg class="r" style="left:1589px;top:495px;" width="10" height="14" viewBox="0 0 10 14" fill="none"><path d="M3 2 L8 7 L3 12" stroke="#6b7180" stroke-width="1" fill="none"/></svg><div class="r" style="left:1600px;top:50px;width:1px;height:903px;background:#d6d9e0"></div><div class="r" style="left:1800px;top:50px;width:40px;height:40px;background:#e4e6eb"></div><div class="r" style="left:1601px;top:90px;width:319px;height:1px;background:#d6d9e0"></div><div class="r" style="left:1601px;top:139px;width:319px;height:1px;background:#d6d9e0"></div><svg class="r" style="left:1610px;top:58.8px;" width="22" height="22" viewBox="0 0 22 22" fill="none"><g transform="translate(1.1,1.1) scale(0.9)"><path d="M4.5 3 Q3 3.8 3 6 Q3.5 12 9 16.5 Q13.5 20 17 19.5 Q19 19 19.3 17.5 L16 14.5 Q15 14 14.2 14.8 L13 16 Q10 14.5 7.5 11.5 Q6.5 10 6.3 9 L7.5 7.8 Q8.3 7 7.8 6Z" fill="#7581a0"/></g></svg><svg class="r" style="left:1650px;top:58.8px;" width="22" height="22" viewBox="0 0 22 22" fill="none"><g transform="translate(1.1,1.1) scale(0.9)"><rect x="4.5" y="3.5" width="13" height="16" rx="2" fill="#7581a0"/><rect x="8" y="1.5" width="6" height="3.6" rx="1" fill="#7581a0" stroke="#fff" stroke-width="1"/><path d="M7.8 12 L10 14.2 L14.5 9.8" stroke="#fff" stroke-width="1.4" fill="none"/></g></svg><svg class="r" style="left:1690px;top:58.8px;" width="22" height="22" viewBox="0 0 22 22" fill="none"><g transform="translate(1.1,1.1) scale(0.9)"><rect x="3" y="5" width="16" height="14" rx="1.5" fill="#7581a0"/><path d="M3 9.5 H19" stroke="#fff" stroke-width="1"/><path d="M7 2.5 V7 M15 2.5 V7" stroke="#7581a0" stroke-width="1.6"/><path d="M7 3.5 V6.5 M15 3.5 V6.5" stroke="#fff" stroke-width="0.5"/></g></svg><svg class="r" style="left:1730px;top:58.8px;" width="22" height="22" viewBox="0 0 22 22" fill="none"><g transform="translate(1.1,1.1) scale(0.9)"><rect x="2" y="5" width="18" height="13" rx="1.5" fill="#7581a0"/><path d="M2.5 6 L11 12.5 L19.5 6" stroke="#fff" stroke-width="1.3" fill="none"/></g></svg><svg class="r" style="left:1770px;top:58.8px;" width="22" height="22" viewBox="0 0 22 22" fill="none"><g transform="translate(1.1,1.1) scale(0.9)"><path d="M11 3 Q19.5 3 19.5 9.5 Q19.5 16 11 16 Q9.5 16 8 15.5 L4.5 18.5 L5.5 14.5 Q2.5 12.5 2.5 9.5 Q2.5 3 11 3Z" fill="#7581a0"/><circle cx="7.3" cy="9.5" r="1.2" fill="#fff"/><circle cx="11" cy="9.5" r="1.2" fill="#fff"/><circle cx="14.7" cy="9.5" r="1.2" fill="#fff"/></g></svg><svg class="r" style="left:1810px;top:58.8px;" width="22" height="22" viewBox="0 0 22 22" fill="none"><g transform="translate(1.1,1.1) scale(0.9)"><path d="M4.5 4 Q3 4.8 3 7 Q3.5 13 9 17.5 Q13.5 21 17 20.5 Q19 20 19.3 18.5 L16 15.5 Q15 15 14.2 15.8 L13 17 Q10 15.5 7.5 12.5 Q6.5 11 6.3 10 L7.5 8.8 Q8.3 8 7.8 7Z" fill="#7581a0"/><path d="M13.5 8 L19 2.5 M15 2.5 H19 V6.5" stroke="#7581a0" stroke-width="1.2" fill="none"/></g></svg><svg class="r" style="left:1850px;top:58.8px;" width="22" height="22" viewBox="0 0 22 22" fill="none"><g transform="translate(1.1,1.1) scale(0.9)"><path d="M4 15 V11 Q4 4 11 4 Q18 4 18 11 V15" stroke="#7581a0" stroke-width="1.6" fill="none"/><rect x="2.8" y="11.5" width="4" height="7" rx="2" fill="#7581a0"/><rect x="15.2" y="11.5" width="4" height="7" rx="2" fill="#7581a0"/></g></svg><svg class="r" style="left:1890px;top:58.8px;" width="22" height="22" viewBox="0 0 22 22" fill="none"><g transform="translate(1.1,1.1) scale(0.9)"><rect x="5" y="2.5" width="13" height="17" rx="1.5" stroke="#3e4453" stroke-width="1.1" fill="none"/><circle cx="11.5" cy="8" r="1.4" stroke="#3e4453" stroke-width="1"/><path d="M8 14.5 Q8.5 10.8 11.5 10.8 Q14.5 10.8 15 14.5 M3.5 6 H6 M3.5 14 H6" stroke="#3e4453" stroke-width="1" fill="none"/></g></svg><div class="t" style="left:1643.6px;top:109.3px;font-size:13.3px;font-weight:400;color:#3e52c6;-webkit-text-stroke:0.45px currentColor">Hoạt động</div><div class="t" style="left:1735.8px;top:109.3px;font-size:13.3px;font-weight:400;color:#66696f;-webkit-text-stroke:0.45px currentColor">Mua hàng</div><div class="t" style="left:1827.0px;top:109.3px;font-size:13.3px;font-weight:400;color:#66696f;-webkit-text-stroke:0.45px currentColor">Thuê bao</div><div class="r" style="left:1629px;top:137px;width:90px;height:3px;background:#3346c0"></div><svg class="r" style="left:1609px;top:108px;" width="10" height="14" viewBox="0 0 10 14" fill="none"><path d="M7 2 L2.5 7 L7 12" stroke="#9aa0ad" stroke-width="1.2" fill="none"/></svg><svg class="r" style="left:1902px;top:108px;" width="10" height="14" viewBox="0 0 10 14" fill="none"><path d="M3 2 L7.5 7 L3 12" stroke="#23262d" stroke-width="1.5" fill="none"/></svg><svg class="r" style="left:1745px;top:380px;" width="30" height="38" viewBox="0 0 30 38" fill="none"><defs><linearGradient id="dg" x1="0" y1="0" x2="0" y2="1"><stop offset="0" stop-color="#eceef3"/><stop offset="1" stop-color="#dcdfe7"/></linearGradient></defs><path d="M3 2 H19 L28 10 V35 Q28 36 27 36 H4 Q3 36 3 35Z" fill="url(#dg)"/><rect x="6" y="18" width="15" height="2.6" fill="#b9bdc8"/><rect x="6" y="24.5" width="8" height="2.6" fill="#c3c7d0"/></svg><div class="t" style="left:1709.7px;top:433.6px;font-size:13px;font-weight:400;color:#596074;font-style:italic">Không có dữ liệu.</div><div class="t" style="left:14.3px;top:242.2px;font-size:17px;font-weight:400;color:#23262d;letter-spacing:0.65px;-webkit-text-stroke:0.4px #23262d">Đơn vị/Công ty trực thuộc</div><div class="r" style="left:16px;top:277px;width:240px;height:32px;border:1px solid #d5d9e0;border-radius:4px;background:#fff"></div><svg class="r" style="left:24px;top:285px;" width="16" height="16" viewBox="0 0 16 16" fill="none"><circle cx="6.8" cy="6.8" r="5.3" stroke="#2f333b" stroke-width="1.2"/><path d="M10.7 10.7 L14.5 14.5" stroke="#2f333b" stroke-width="1.3"/></svg><div class="t" style="left:47.5px;top:286.0px;font-size:13.3px;font-weight:400;color:#a1a7b5;">Tìm kiếm theo tên</div><div class="r" style="left:1198px;top:277px;width:151px;height:32px;border-radius:4px;background:#e8ebfd"></div><svg class="r" style="left:1206px;top:284px;" width="18" height="18" viewBox="0 0 18 18" fill="none"><path d="M14 8.5 V15.5 Q14 16.3 13.2 16.3 H2.8 Q2 16.3 2 15.5 V4.8 Q2 4 2.8 4 H11" stroke="#4a66ee" stroke-width="1.2" fill="none"/><path d="M5 9 L8 12 L16 3.5" stroke="#4a66ee" stroke-width="1.3" fill="none"/></svg><div class="t" style="left:1231.4px;top:285.6px;font-size:13px;font-weight:400;color:#4a66ee;-webkit-text-stroke:0.45px currentColor">Chọn khách hàng</div><div class="r" style="left:1357px;top:277px;width:155px;height:32px;border-radius:4px;background:#e8ebfd"></div><svg class="r" style="left:1366px;top:284px;" width="18" height="18" viewBox="0 0 18 18" fill="none"><path d="M9 2.5 V15.5 M2.5 9 H15.5" stroke="#4a66ee" stroke-width="1.2"/></svg><div class="t" style="left:1390.6px;top:285.6px;font-size:13px;font-weight:400;color:#4a66ee;-webkit-text-stroke:0.45px currentColor">Thêm Khách hàng</div><div class="r" style="left:1520px;top:277px;width:64px;height:32px;border-radius:4px;background:#e4e6eb"></div><div class="r" style="left:1521.5px;top:279px;width:27.5px;height:28px;border-radius:3px;background:#fff"></div><svg class="r" style="left:1527px;top:285px;" width="16" height="16" viewBox="0 0 16 16" fill="none"><path d="M1.5 3 H14.5 M1.5 8 H14.5 M1.5 13 H14.5" stroke="#3e4453" stroke-width="1.1"/></svg><svg class="r" style="left:1560px;top:285px;" width="16" height="16" viewBox="0 0 16 16" fill="none"><rect x="1" y="1" width="6" height="6" rx="2" stroke="#3e4453" stroke-width="1.1"/><rect x="9" y="1" width="6" height="6" rx="2" stroke="#3e4453" stroke-width="1.1"/><rect x="1" y="9" width="6" height="6" rx="2" stroke="#3e4453" stroke-width="1.1"/><rect x="9" y="9" width="6" height="6" rx="2" stroke="#3e4453" stroke-width="1.1"/></svg><div class="r" style="left:16.5px;top:325px;width:1567px;height:243px;border:1px solid #d9dce3;background:#fff"></div><div class="r" style="left:17.5px;top:326px;width:1565px;height:40px;background:#f0f1f4"></div><div class="r" style="left:17.5px;top:366px;width:1565px;height:1px;background:#d9dce3"></div><div class="t" style="left:70.5px;top:339.0px;font-size:13.3px;font-weight:400;color:#23262d;-webkit-text-stroke:0.45px currentColor">Mã số thuế</div><div class="t" style="left:220.0px;top:339.0px;font-size:13.3px;font-weight:400;color:#23262d;-webkit-text-stroke:0.45px currentColor">Tên khách hàng</div><div class="t" style="left:570.0px;top:339.0px;font-size:13.3px;font-weight:400;color:#23262d;-webkit-text-stroke:0.45px currentColor">Địa chỉ (Hóa đơn)</div><div class="t" style="left:770.0px;top:339.0px;font-size:13.3px;font-weight:400;color:#23262d;-webkit-text-stroke:0.45px currentColor">Mã ngân sách</div><div class="t" style="left:920.0px;top:339.0px;font-size:13.3px;font-weight:400;color:#23262d;-webkit-text-stroke:0.45px currentColor">Điện thoại</div><div class="t" style="left:1070.0px;top:339.0px;font-size:13.3px;font-weight:400;color:#23262d;-webkit-text-stroke:0.45px currentColor">Email</div><div class="t" style="left:1250.6px;top:339.0px;font-size:13.3px;font-weight:400;color:#23262d;-webkit-text-stroke:0.45px currentColor">Mô tả</div><div class="t" style="left:1450.3px;top:339.0px;font-size:13.3px;font-weight:400;color:#23262d;-webkit-text-stroke:0.45px currentColor">Ngày sửa</div><div class="r" style="left:1552px;top:333px;width:24px;height:24px;border-radius:50%;background:#fff;box-shadow:0 1px 4px #00000030"></div><svg class="r" style="left:1552px;top:333px;" width="24" height="24" viewBox="0 0 24 24" fill="none"><path d="M6 5.5 H17.5 V12 M6 5.5 V18.5 H12 M6 9 H17.5 M10 9 V18.5 M14.5 13 V19 M11.5 16 H17.5" stroke="#4b5263" stroke-width="1.1" fill="none"/></svg><div class="r" style="left:17.5px;top:406px;width:1565px;height:1px;background:#dde0e6"></div><div class="t" style="left:70.0px;top:379.8px;font-size:13px;font-weight:400;color:#23262d;">-</div><div class="t" style="left:219.6px;top:379.8px;font-size:13px;font-weight:400;color:#2042c6;">Trường Trung học cơ sở Nam Trực</div><div class="t" style="left:570.0px;top:379.8px;font-size:13px;font-weight:400;color:#23262d;">-</div><div class="t" style="left:769.5px;top:379.5px;font-size:13.3px;font-weight:400;color:#23262d;">1895216</div><div class="t" style="left:920.0px;top:379.8px;font-size:13px;font-weight:400;color:#23262d;">-</div><div class="t" style="left:1070.0px;top:379.8px;font-size:13px;font-weight:400;color:#23262d;">-</div><div class="t" style="left:1250.0px;top:379.8px;font-size:13px;font-weight:400;color:#23262d;">-</div><div class="t" style="left:1576.0px;top:379.5px;font-size:13.3px;font-weight:400;color:#23262d;letter-spacing:0.32px;transform:translateX(-100%)">13/11/2025 10:21:23</div><div class="r" style="left:17.5px;top:446px;width:1565px;height:1px;background:#dde0e6"></div><div class="t" style="left:70.0px;top:419.8px;font-size:13px;font-weight:400;color:#23262d;">-</div><div class="t" style="left:219.6px;top:419.8px;font-size:13px;font-weight:400;color:#2042c6;">Trạm Y tế Nam Trực</div><div class="t" style="left:570.0px;top:419.8px;font-size:13px;font-weight:400;color:#23262d;">-</div><div class="t" style="left:769.5px;top:419.5px;font-size:13.3px;font-weight:400;color:#23262d;">1666612</div><div class="t" style="left:920.0px;top:419.8px;font-size:13px;font-weight:400;color:#23262d;">-</div><div class="t" style="left:1070.0px;top:419.8px;font-size:13px;font-weight:400;color:#23262d;">-</div><div class="t" style="left:1250.0px;top:419.8px;font-size:13px;font-weight:400;color:#23262d;">-</div><div class="t" style="left:1576.0px;top:419.5px;font-size:13.3px;font-weight:400;color:#23262d;letter-spacing:0.32px;transform:translateX(-100%)">04/11/2025 15:24:04</div><div class="r" style="left:17.5px;top:486px;width:1565px;height:1px;background:#dde0e6"></div><div class="t" style="left:70.0px;top:459.8px;font-size:13px;font-weight:400;color:#23262d;">-</div><div class="t" style="left:219.6px;top:459.8px;font-size:13px;font-weight:400;color:#2042c6;">Trường Tiểu học Nam Trực</div><div class="t" style="left:570.0px;top:459.8px;font-size:13px;font-weight:400;color:#23262d;">-</div><div class="t" style="left:769.5px;top:459.5px;font-size:13.3px;font-weight:400;color:#23262d;">1777712</div><div class="t" style="left:920.0px;top:459.8px;font-size:13px;font-weight:400;color:#23262d;">-</div><div class="t" style="left:1070.0px;top:459.8px;font-size:13px;font-weight:400;color:#23262d;">-</div><div class="t" style="left:1250.0px;top:459.8px;font-size:13px;font-weight:400;color:#23262d;">-</div><div class="t" style="left:1576.0px;top:459.5px;font-size:13.3px;font-weight:400;color:#23262d;letter-spacing:0.32px;transform:translateX(-100%)">04/11/2025 15:23:09</div><div class="r" style="left:17.5px;top:526px;width:1565px;height:1px;background:#dde0e6"></div><div class="t" style="left:70.0px;top:499.8px;font-size:13px;font-weight:400;color:#23262d;">-</div><div class="t" style="left:219.6px;top:499.8px;font-size:13px;font-weight:400;color:#2042c6;">Phòng Kinh tế xã Nam Trực</div><div class="t" style="left:570.0px;top:499.8px;font-size:13px;font-weight:400;color:#23262d;">-</div><div class="t" style="left:769.5px;top:499.5px;font-size:13.3px;font-weight:400;color:#23262d;">1999915</div><div class="t" style="left:920.0px;top:499.8px;font-size:13px;font-weight:400;color:#23262d;">-</div><div class="t" style="left:1070.0px;top:499.8px;font-size:13px;font-weight:400;color:#23262d;">-</div><div class="t" style="left:1250.0px;top:499.8px;font-size:13px;font-weight:400;color:#23262d;">-</div><div class="t" style="left:1576.0px;top:499.5px;font-size:13.3px;font-weight:400;color:#23262d;letter-spacing:0.32px;transform:translateX(-100%)">04/11/2025 14:13:12</div><div class="r" style="left:17.5px;top:556.5px;width:1565px;height:10px;background:#f1f2f4"></div><div class="r" style="left:29px;top:558px;width:1447px;height:6px;border-radius:3px;background:#c3c7d1"></div><svg class="r" style="left:18px;top:557px;" width="8" height="9" viewBox="0 0 8 9" fill="none"><path d="M6 1 L2 4.5 L6 8Z" fill="#c3c7d1"/></svg><svg class="r" style="left:1574px;top:557px;" width="8" height="9" viewBox="0 0 8 9" fill="none"><path d="M2 1 L6 4.5 L2 8Z" fill="#c3c7d1"/></svg><div class="t" style="left:48.3px;top:588.5px;font-size:13.3px;font-weight:400;color:#2b2f36;">Tổng số:</div><div class="t" style="left:109.8px;top:588.8px;font-size:13px;font-weight:400;color:#23262d;-webkit-text-stroke:0.45px currentColor">4</div><div class="r" style="left:1177px;top:580px;width:199px;height:32px;border:1px solid #d5d9e0;border-radius:4px;background:#fff"></div><div class="t" style="left:1194.8px;top:588.3px;font-size:13.3px;font-weight:400;color:#23262d;">10 Bản ghi trên Trang</div><svg class="r" style="left:1354px;top:591px;" width="12" height="10" viewBox="0 0 12 10" fill="none"><path d="M1 2.5 L6 7.5 L11 2.5" stroke="#4b5263" stroke-width="1.1" fill="none"/></svg><svg class="r" style="left:1398px;top:588px;" width="14" height="16" viewBox="0 0 14 16" fill="none"><path d="M2 2 V14 M11 2 L5 8 L11 14" stroke="#a7acb8" stroke-width="1.1" fill="none"/></svg><svg class="r" style="left:1423px;top:588px;" width="12" height="16" viewBox="0 0 12 16" fill="none"><path d="M9 2 L3 8 L9 14" stroke="#a7acb8" stroke-width="1.1" fill="none"/></svg><div class="t" style="left:1450.0px;top:588.6px;font-size:13px;font-weight:400;color:#23262d;-webkit-text-stroke:0.45px currentColor">1</div><div class="t" style="left:1469.6px;top:588.3px;font-size:13.3px;font-weight:400;color:#23262d;">đến</div><div class="t" style="left:1503.5px;top:588.6px;font-size:13px;font-weight:400;color:#23262d;-webkit-text-stroke:0.45px currentColor">4</div><svg class="r" style="left:1525px;top:588px;" width="12" height="16" viewBox="0 0 12 16" fill="none"><path d="M3 2 L9 8 L3 14" stroke="#a7acb8" stroke-width="1.1" fill="none"/></svg><svg class="r" style="left:1549px;top:588px;" width="14" height="16" viewBox="0 0 14 16" fill="none"><path d="M12 2 V14 M3 2 L9 8 L3 14" stroke="#a7acb8" stroke-width="1.1" fill="none"/></svg></div></div><div class="r" id="N" style="left:0;top:0;width:2145px;height:1191px"><div class="r" style="left:83px;top:183.5px;width:131.5px;height:51.5px;border:3px solid #e64545"></div><div class="r" style="left:200px;top:163.6px;width:38px;height:38px;border-radius:50%;background:#e64545;box-shadow:0 1px 2px #0003"></div><svg class="r" style="left:200px;top:163.6px;" width="38" height="38" viewBox="0 0 38 38" fill="none"><path d="M21.0 8.1 L21.0 28.3 L18.2 28.3 L18.2 11.7 L13.7 13.5 L13.7 11.0 L20.2 8.1Z" fill="#fff"/></svg><div class="r" style="left:216px;top:471px;width:154px;height:44px;border:3px solid #e64545"></div><div class="r" style="left:352px;top:451.5px;width:38px;height:38px;border-radius:50%;background:#e64545;box-shadow:0 1px 2px #0003"></div><div class="t" style="left:352.0px;top:456.4px;font-size:28px;font-weight:400;color:#fff;width:38px;text-align:center">2</div><div class="r" style="left:1104px;top:737px;width:200px;height:51px;border:3px solid #e64545"></div><div class="r" style="left:1288px;top:717.5px;width:38px;height:38px;border-radius:50%;background:#e64545;box-shadow:0 1px 2px #0003"></div><div class="t" style="left:1288.0px;top:722.4px;font-size:28px;font-weight:400;color:#fff;width:38px;text-align:center">3</div><div class="r" style="left:388px;top:919px;width:1414px;height:42px;border:3px solid #e64545"></div><svg class="r" style="left:380px;top:470px;" width="230" height="140" viewBox="0 0 230 140" fill="none"><defs><filter id="sh" x="-20%" y="-20%" width="140%" height="140%"><feDropShadow dx="1" dy="2.5" stdDeviation="1.5" flood-color="#000" flood-opacity="0.4"/></filter></defs><g filter="url(#sh)"><path d="M10 15.3 L192 119" stroke="#e64545" stroke-width="5.6" stroke-linecap="round"/><path d="M188.2 126.3 L196.6 112.9 L205.3 126.6Z" fill="#e64545" stroke="#e64545" stroke-width="0.8" stroke-linejoin="round"/></g></svg><svg class="r" style="left:260px;top:925px;" width="140" height="30" viewBox="0 0 140 30" fill="none"><defs><filter id="sh2" x="-20%" y="-40%" width="140%" height="180%"><feDropShadow dx="1" dy="2.5" stdDeviation="1.5" flood-color="#000" flood-opacity="0.4"/></filter></defs><g filter="url(#sh2)"><path d="M13.6 13.6 L112 15.2" stroke="#e64545" stroke-width="5.4" stroke-linecap="round"/><path d="M111.6 8 L111.6 22.7 L126 15.6Z" fill="#e64545"/></g></svg></div></body></html>
